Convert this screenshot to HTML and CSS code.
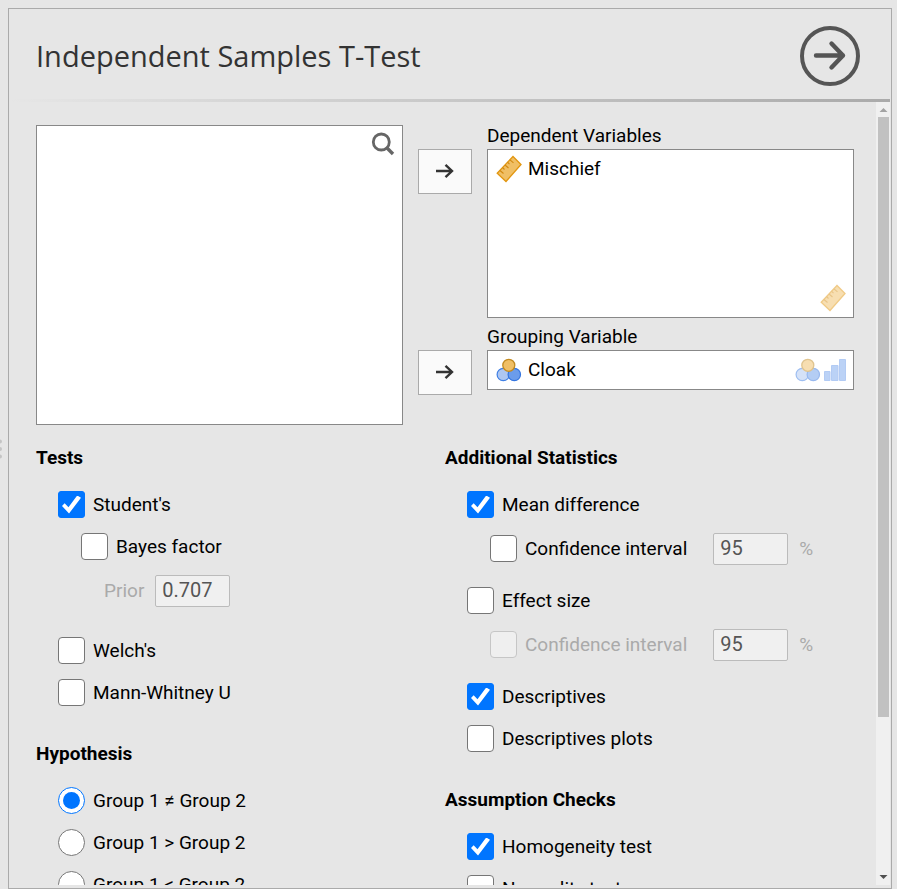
FILE: index.html
```html
<!DOCTYPE html>
<html lang="en">
<head>
    <meta charset="UTF-8">
    <meta name="viewport" content="width=device-width, initial-scale=1.0">
    <title>Independent Samples T-Test</title>
    <link rel="stylesheet" href="styles.css">
</head>
<body>
    <!-- shared icon shapes -->
    <svg class="icon-defs" aria-hidden="true">
        <symbol id="icon-arrow" viewBox="0 0 20 16">
            <path d="M1 8H17M10.500 1.800L17 8L10.500 14.200" fill="none" stroke="#333" stroke-width="2.400"/>
        </symbol>
        <symbol id="icon-ruler" viewBox="0 0 26 28">
            <path d="M1.200 18.200L17 1.500L25 9.500L10 26.500Z" fill="#f0bf65" stroke="#e2960f" stroke-width="1.300"/>
            <path d="M4 15.500L7.500 18.500M6.500 12.500L8.500 14.500M9 10L12.500 13M11.500 7.200L13.500 9.200M14 4.800L17.500 7.800" fill="none" stroke="#d28a12" stroke-width="1.100"/>
        </symbol>
        <symbol id="icon-nominal" viewBox="0 0 26 24">
            <circle cx="7.300" cy="16.500" r="6.200" fill="#adc7f2" stroke="#3f7fe4" stroke-width="1.200"/>
            <circle cx="18.300" cy="16.500" r="6.200" fill="#6b9ceb" stroke="#3374df" stroke-width="1.200"/>
            <circle cx="12.800" cy="7.300" r="6" fill="#f0bf65" stroke="#c28a20" stroke-width="1.300"/>
        </symbol>
        <symbol id="icon-ordinal" viewBox="0 0 22 22">
            <path d="M0.500 12.500H6V21.500H0.500ZM7.500 6.500H14V21.500H7.500ZM15.500 0.500H21.500V21.500H15.500Z" fill="#7aa6ee" stroke="#6898ea"/>
        </symbol>
    </svg>

    <div class="splitter">
        <svg width="3" height="20" viewBox="0 0 3 20" fill="#c4c4c4">
            <circle cx="0" cy="2.500" r="2"/>
            <circle cx="0" cy="10" r="2"/>
            <circle cx="0" cy="17.500" r="2"/>
        </svg>
    </div>

    <main class="panel">
        <header class="header">
            <h1>Independent Samples T-Test</h1>
            <button type="button" class="ok-button" aria-label="Done">
                <svg width="60" height="60" viewBox="0 0 60 60" fill="none" stroke="#555" stroke-width="4">
                    <circle cx="30" cy="30" r="28"/>
                    <path d="M16 29.500H43M31.500 17.500L43 29.500L31.500 41.500" stroke-width="4.400" stroke-linecap="round" stroke-linejoin="round"/>
                </svg>
            </button>
        </header>
        <div class="divider"></div>

        <div class="body">
            <div class="content">
                <div class="supplier">
                    <div class="variable-list">
                        <button type="button" class="search-button" aria-label="Search">
                            <svg width="24" height="24" viewBox="0 0 24 24" fill="none" stroke="#666">
                                <circle cx="10.300" cy="10" r="8" stroke-width="2.800"/>
                                <path d="M15.800 15.800L22 22" stroke-width="3.400"/>
                            </svg>
                        </button>
                    </div>

                    <button type="button" class="move-button" aria-label="Move to Dependent Variables">
                        <svg width="20" height="16"><use href="#icon-arrow"/></svg>
                    </button>
                    <div class="target">
                        <div class="target-label">Dependent Variables</div>
                        <div class="target-box multi">
                            <div class="variable">
                                <svg width="26" height="28"><use href="#icon-ruler"/></svg>
                                <span>Mischief</span>
                            </div>
                            <div class="permitted">
                                <svg width="26" height="28"><use href="#icon-ruler"/></svg>
                            </div>
                        </div>
                    </div>

                    <button type="button" class="move-button" aria-label="Move to Grouping Variable">
                        <svg width="20" height="16"><use href="#icon-arrow"/></svg>
                    </button>
                    <div class="target">
                        <div class="target-label">Grouping Variable</div>
                        <div class="target-box">
                            <div class="variable">
                                <svg width="26" height="24"><use href="#icon-nominal"/></svg>
                                <span>Cloak</span>
                            </div>
                            <div class="permitted">
                                <svg width="26" height="24"><use href="#icon-nominal"/></svg>
                                <svg width="22" height="22"><use href="#icon-ordinal"/></svg>
                            </div>
                        </div>
                    </div>
                </div>

                <div class="options">
                    <div class="column">
                        <section class="group">
                            <h2>Tests</h2>
                            <div class="items">
                                <label class="option"><input type="checkbox" checked><span>Student's</span></label>
                                <div class="nested">
                                    <label class="option"><input type="checkbox"><span>Bayes factor</span></label>
                                    <div class="nested">
                                        <div class="value-row prior disabled">
                                            <label for="prior">Prior</label>
                                            <input type="text" id="prior" class="text-input" value="0.707" disabled>
                                        </div>
                                    </div>
                                </div>
                                <label class="option"><input type="checkbox"><span>Welch's</span></label>
                                <label class="option"><input type="checkbox"><span>Mann-Whitney U</span></label>
                            </div>
                        </section>

                        <section class="group">
                            <h2>Hypothesis</h2>
                            <div class="items">
                                <label class="option"><input type="radio" name="hypothesis" checked><span>Group 1 ≠ Group 2</span></label>
                                <label class="option"><input type="radio" name="hypothesis"><span>Group 1 &gt; Group 2</span></label>
                                <label class="option"><input type="radio" name="hypothesis"><span>Group 1 &lt; Group 2</span></label>
                            </div>
                        </section>
                    </div>

                    <div class="column">
                        <section class="group">
                            <h2>Additional Statistics</h2>
                            <div class="items">
                                <label class="option"><input type="checkbox" checked><span>Mean difference</span></label>
                                <div class="nested">
                                    <div class="value-row">
                                        <label class="option"><input type="checkbox"><span>Confidence interval</span></label>
                                        <input type="text" class="text-input" value="95" aria-label="Mean difference confidence level" disabled>
                                        <span class="suffix">%</span>
                                    </div>
                                </div>
                                <label class="option"><input type="checkbox"><span>Effect size</span></label>
                                <div class="nested">
                                    <div class="value-row disabled">
                                        <label class="option"><input type="checkbox" disabled><span>Confidence interval</span></label>
                                        <input type="text" class="text-input" value="95" aria-label="Effect size confidence level" disabled>
                                        <span class="suffix">%</span>
                                    </div>
                                </div>
                                <label class="option"><input type="checkbox" checked><span>Descriptives</span></label>
                                <label class="option"><input type="checkbox"><span>Descriptives plots</span></label>
                            </div>
                        </section>

                        <section class="group">
                            <h2>Assumption Checks</h2>
                            <div class="items">
                                <label class="option"><input type="checkbox" checked><span>Homogeneity test</span></label>
                                <label class="option"><input type="checkbox"><span>Normality test</span></label>
                            </div>
                        </section>
                    </div>
                </div>
            </div>

            <div class="scrollbar" aria-hidden="true">
                <svg width="14" height="15" viewBox="0 0 14 15"><path d="M3.500 10L7.500 6L11.500 10Z" fill="#a3a3a3"/></svg>
                <div class="scroll-track"><div class="scroll-thumb"></div></div>
                <svg width="14" height="15" viewBox="0 0 14 15"><path d="M3.500 5L7.500 9L11.500 5Z" fill="#505050"/></svg>
            </div>
        </div>
    </main>
</body>
</html>
```
FILE: styles.css
```css
* {
    box-sizing: border-box;
}

body {
    display: flex;
    height: 100vh;
    margin: 0;
    padding: 8px 5px 0 0;
    overflow: hidden;
    font-family: Roboto, "Liberation Sans", sans-serif;
    font-size: 19px;
    line-height: 24px;
    color: #000;
    background-color: #e6e6e6;
}

button {
    padding: 0;
    border: none;
    background: none;
    cursor: pointer;
}

svg {
    display: block;
    flex-shrink: 0;
}

.icon-defs {
    position: absolute;
    width: 0;
    height: 0;
}

.splitter {
    display: flex;
    align-items: center;
    width: 8px;
    cursor: col-resize;
}

.panel {
    flex: 1;
    display: flex;
    flex-direction: column;
    min-width: 0;
    padding-bottom: 3px;
    border: 1px solid #aaa;
}

.header {
    display: flex;
    justify-content: space-between;
    align-items: center;
    flex-shrink: 0;
    height: 90px;
    padding: 4px 31px 0 27px;
}

.header h1 {
    margin: 0;
    font-family: "Open Sans", "Noto Sans", sans-serif;
    font-size: 29px;
    font-weight: 400;
    line-height: 40px;
    color: #333;
}

.divider {
    flex-shrink: 0;
    height: 3px;
    margin-right: 1px;
    background: linear-gradient(to right, #e6e6e6, #aaa);
}

.body {
    flex: 1;
    display: flex;
    min-height: 0;
    padding-right: 1px;
}

.content {
    flex: 1;
    min-width: 0;
    padding: 23px 22px 0 27px;
    overflow: hidden;
}

/* variable supplier */

.supplier {
    display: grid;
    grid-template-columns: 1fr 54px 1fr;
    grid-template-rows: auto 1fr;
    gap: 8px 15px;
    min-height: 300px;
}

.variable-list {
    grid-row: 1 / 3;
    display: flex;
    justify-content: flex-end;
    align-items: flex-start;
    padding: 6px 7px 0 0;
    border: 1px solid #888;
    background-color: #fff;
}

.move-button {
    display: flex;
    align-items: center;
    justify-content: center;
    height: 45px;
    margin-top: 24px;
    padding-bottom: 1px;
    border: 1px solid #aaa;
    background-color: #fafafa;
}

.target-label {
    height: 24px;
    line-height: 22px;
}

.target-box {
    display: flex;
    justify-content: space-between;
    height: 40px;
    padding: 0 7px 0 8px;
    border: 1px solid #888;
    background-color: #fff;
}

.target-box.multi {
    height: 169px;
}

.variable {
    display: flex;
    align-items: center;
    gap: 6px;
    height: 38px;
}

.permitted {
    display: flex;
    align-items: center;
    align-self: flex-end;
    gap: 3px;
    height: 38px;
    opacity: 0.5;
}

/* options */

.options {
    display: grid;
    grid-template-columns: 1fr 1fr;
    margin-top: 21px;
}

.group {
    margin-bottom: 28px;
}

.group h2 {
    margin: 0 0 14px;
    font-size: 19px;
    font-weight: 700;
    line-height: 24px;
}

.items {
    margin-left: 22px;
}

.nested {
    padding-left: 23px;
    padding-bottom: 8px;
}

.option {
    display: flex;
    align-items: center;
    gap: 8px;
    height: 42px;
}

.option input {
    display: grid;
    place-content: center;
    appearance: none;
    width: 27px;
    height: 27px;
    margin: 0 0 1px;
    border: 1px solid #767676;
    border-radius: 4px;
    background-color: #fff;
}

.option input[type="checkbox"]:checked {
    border-color: #0075ff;
    border-radius: 3px;
    background-color: #0075ff;
}

.option input[type="checkbox"]:checked::before {
    content: "";
    width: 19px;
    height: 18px;
    background-color: #fff;
    clip-path: polygon(0 58%, 14% 43%, 34% 65%, 80% 0, 100% 13%, 37% 100%);
}

.option input[type="radio"] {
    border-radius: 50%;
}

.option input[type="radio"]:checked {
    border-color: #0075ff;
}

.option input[type="radio"]:checked::before {
    content: "";
    width: 17px;
    height: 17px;
    border-radius: 50%;
    background-color: #0075ff;
}

.option input:disabled {
    border-color: #c6c6c6;
    background-color: #efefef;
}

.value-row {
    display: flex;
    align-items: center;
    height: 46px;
}

.text-input {
    width: 75px;
    height: 32px;
    margin-left: 26px;
    padding: 0 6px 2px;
    border: 1px solid #bbb;
    border-radius: 2px;
    font-family: inherit;
    font-size: 20px;
    color: #555;
    background-color: #f0f0f0;
}

.prior .text-input {
    margin-left: 11px;
}

.suffix {
    margin-left: 11px;
    color: #aaa;
}

.disabled {
    color: #aaa;
}

/* scrollbar */

.scrollbar {
    display: flex;
    flex-direction: column;
    width: 14px;
    background-color: #f0f0f0;
}

.scroll-track {
    flex: 1;
    padding: 0 1px 0 2px;
}

.scroll-thumb {
    height: 79.7%;
    background-color: #c1c1c1;
}
```
